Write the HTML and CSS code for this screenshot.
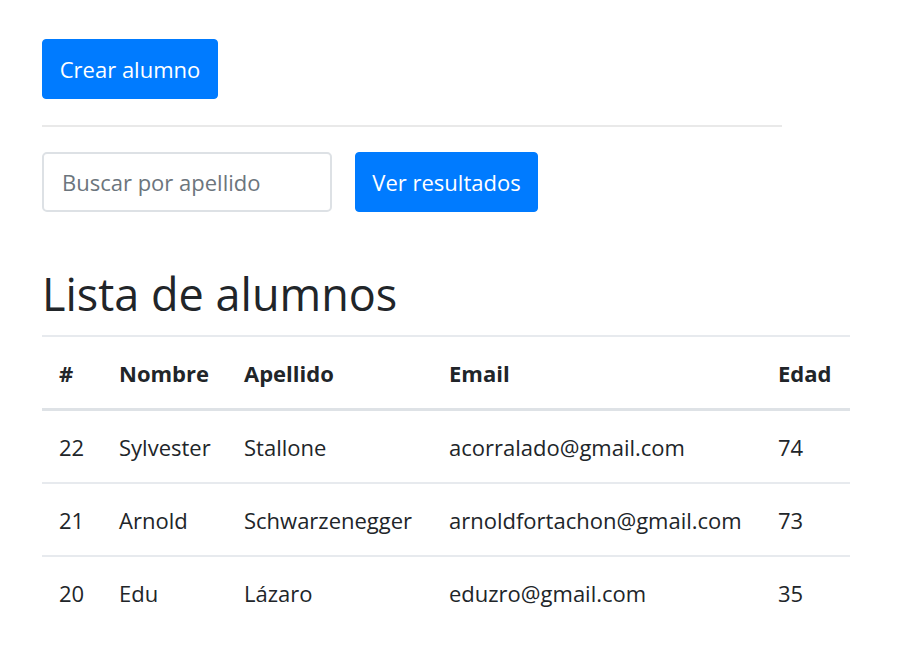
FILE: index.html
```html
<!DOCTYPE html>
<html lang="es">
<head>
<meta charset="utf-8">
<title>Lista de alumnos</title>
<link rel="stylesheet" href="styles.css">
</head>
<body>
<div class="page">
  <div class="top">
    <button class="btn btn-create">Crear alumno</button>
  </div>
  <hr class="divider">
  <form class="search">
    <input class="search-input" type="text" placeholder="Buscar por apellido">
    <button class="btn btn-search" type="button">Ver resultados</button>
  </form>
  <h2 class="title">Lista de alumnos</h2>
  <table class="table">
    <colgroup>
      <col class="c-id"><col class="c-name"><col class="c-last"><col class="c-email"><col class="c-age">
    </colgroup>
    <thead>
      <tr><th>#</th><th>Nombre</th><th>Apellido</th><th>Email</th><th>Edad</th></tr>
    </thead>
    <tbody>
      <tr><td>22</td><td>Sylvester</td><td>Stallone</td><td>acorralado@gmail.com</td><td>74</td></tr>
      <tr><td>21</td><td>Arnold</td><td>Schwarzenegger</td><td>arnoldfortachon@gmail.com</td><td>73</td></tr>
      <tr><td>20</td><td>Edu</td><td>Lázaro</td><td>eduzro@gmail.com</td><td>35</td></tr>
    </tbody>
  </table>
</div>
</body>
</html>
```

FILE: styles.css
```css
html, body {
  margin: 0;
  padding: 0;
  background: #fff;
}
body {
  font-family: "Open Sans", "Noto Sans", sans-serif;
  color: #212529;
  font-size: 22px;
}
.page {
  padding: 39px 0 0 42px;
}
.top {
  display: flex;
}
.btn {
  font-family: inherit;
  font-size: 22px;
  color: #fff;
  background: #007bff;
  border: 1px solid #007bff;
  border-radius: 4px;
  height: 60px;
  padding: 0;
  cursor: pointer;
}
.btn-create {
  width: 176px;
}
.divider {
  margin: 26px 0 0 0;
  width: 740px;
  border: 0;
  border-top: 2px solid #e9e9e9;
  height: 0;
}
.search {
  display: flex;
  gap: 23px;
  margin: 25px 0 0 0;
}
.search-input {
  box-sizing: border-box;
  width: 290px;
  height: 60px;
  border: 2px solid #dde1e5;
  border-radius: 5px;
  padding: 0 18px;
  font-family: inherit;
  font-size: 22px;
  color: #495057;
}
.search-input::placeholder {
  color: #6c757d;
}
.btn-search {
  width: 183px;
}
.title {
  margin: 53px 0 12px 0;
  font-size: 45px;
  font-weight: 500;
  line-height: 58px;
  color: #212529;
}
.table {
  width: 808px;
  border-collapse: collapse;
  table-layout: fixed;
}
.c-id { width: 60px; }
.c-name { width: 125px; }
.c-last { width: 205px; }
.c-email { width: 329px; }
.c-age { width: 89px; }
.table th,
.table td {
  text-align: left;
  padding: 0 0 0 17px;
  height: 71px;
  border-top: 2px solid #e7eaee;
  white-space: nowrap;
  vertical-align: middle;
}
.table th {
  font-weight: 700;
  border-bottom: 3px solid #dee2e6;
}
```
